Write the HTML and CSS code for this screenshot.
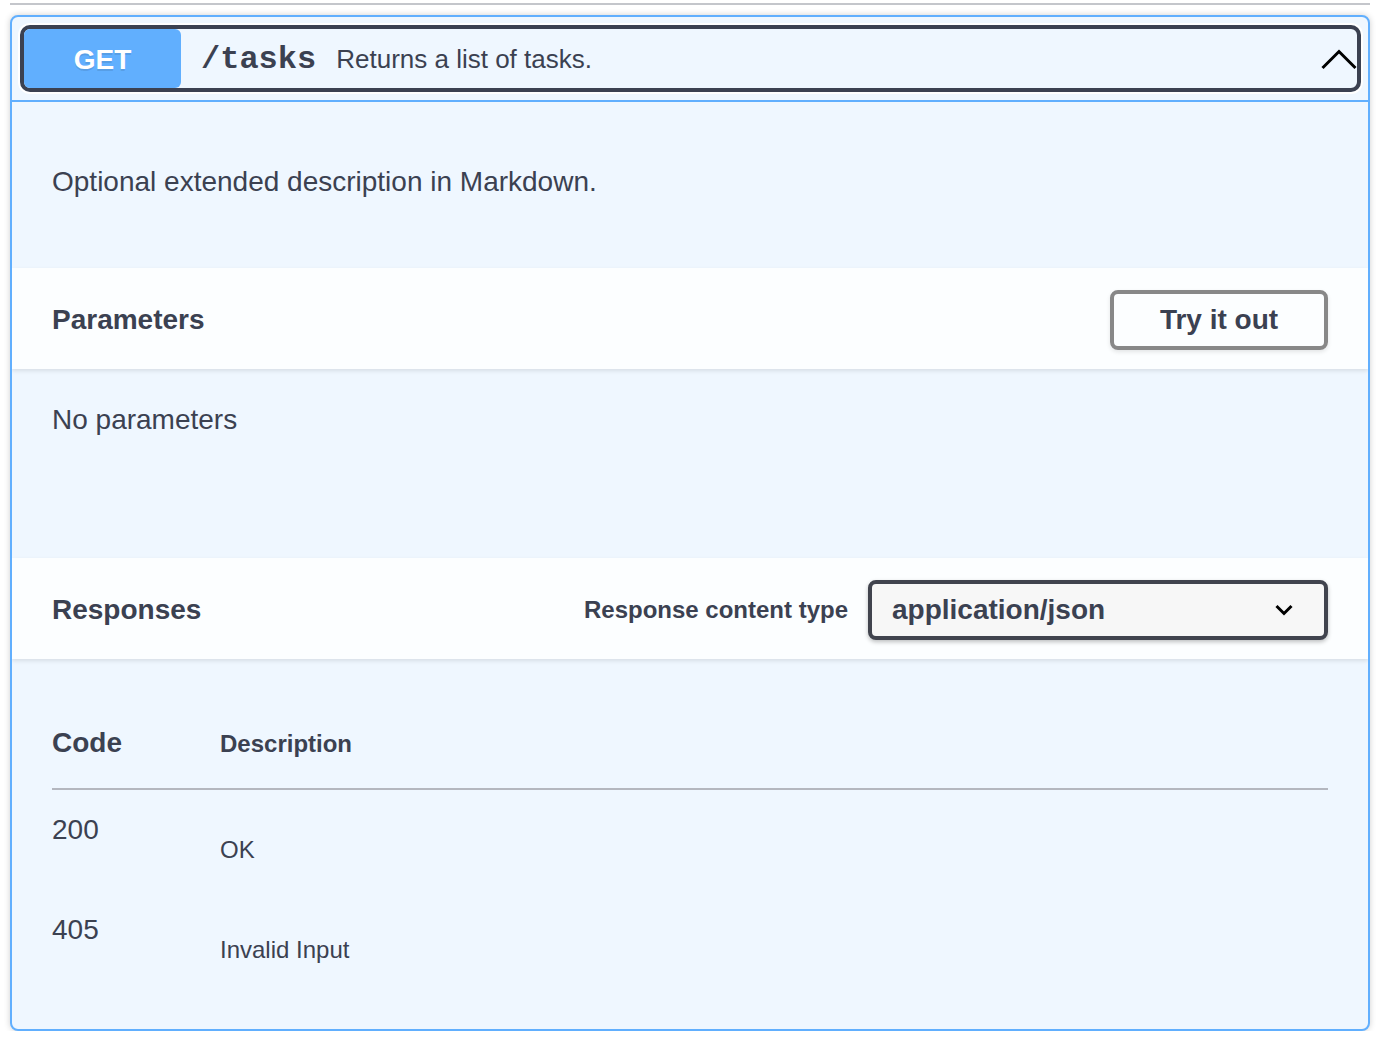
FILE: index.html
```html
<!DOCTYPE html>
<html lang="en">
<head>
<meta charset="utf-8">
<title>GET /tasks</title>
<link rel="stylesheet" href="styles.css">
</head>
<body>
<div class="page">
  <div class="tag-rule"></div>
  <div class="opblock">
    <div class="summary">
      <div class="summary-control">
        <span class="method">GET</span>
        <span class="path">/tasks</span>
        <span class="summary-desc">Returns a list of tasks.</span>
        <svg class="arrow" width="36" height="22" viewBox="0 0 36 22" aria-hidden="true">
          <polyline points="1.5,20 18,3.5 34.5,20" fill="none" stroke="#000" stroke-width="3"/>
        </svg>
      </div>
    </div>
    <div class="op-desc">
      <p>Optional extended description in Markdown.</p>
    </div>
    <div class="section-header">
      <h4>Parameters</h4>
      <button class="try-out" type="button">Try it out</button>
    </div>
    <div class="params-body">
      <p>No parameters</p>
    </div>
    <div class="section-header">
      <h4>Responses</h4>
      <div class="media-type">
        <span class="media-label">Response content type</span>
        <div class="select">
          <span>application/json</span>
          <svg width="18" height="12" viewBox="0 0 18 12" aria-hidden="true">
            <polyline points="1.5,2 9,9.5 16.5,2" fill="none" stroke="#000" stroke-width="3"/>
          </svg>
        </div>
      </div>
    </div>
    <div class="responses">
      <div class="resp-table">
        <div class="resp-head">
          <div class="col-code">Code</div>
          <div class="col-desc">Description</div>
        </div>
        <div class="resp-row">
          <div class="col-code">200</div>
          <div class="col-desc">OK</div>
        </div>
        <div class="resp-row">
          <div class="col-code">405</div>
          <div class="col-desc">Invalid Input</div>
        </div>
      </div>
    </div>
  </div>
</div>
</body>
</html>
```
FILE: styles.css
```css
* { box-sizing: border-box; }

html, body {
  margin: 0;
  padding: 0;
  background: #ffffff;
}

body {
  font-family: "Liberation Sans", Arial, Helvetica, sans-serif;
  color: #3b4151;
}

.page {
  width: 1360px;
  margin-left: 10px;
  padding-top: 3px;
}

.tag-rule {
  height: 2px;
  background: #c4c6cb;
}

.opblock {
  margin-top: 10px;
  border: 2px solid #61affe;
  border-radius: 8px;
  background: #eff7ff;
  box-shadow: 0 0 6px rgba(0, 0, 0, 0.19);
  overflow: hidden;
}

.summary {
  padding: 8px 7px 8px 8px;
  border-bottom: 2px solid #61affe;
}

.summary-control {
  display: flex;
  align-items: center;
  height: 67px;
  border: 4px solid #3b4151;
  border-radius: 10px;
  box-shadow: 0 0 0 2px #ffffff;
}

.method {
  width: 157px;
  height: 59px;
  padding-top: 1px;
  line-height: 59px;
  text-align: center;
  background: #61affe;
  color: #ffffff;
  font-weight: 700;
  font-size: 28px;
  border-radius: 6px;
  text-shadow: 0 2px 0 rgba(0, 0, 0, 0.1);
}

.path {
  padding: 2px 20px 0;
  font-family: "Liberation Mono", "Courier New", monospace;
  font-weight: 700;
  font-size: 32px;
  color: #3b4151;
}

.summary-desc {
  flex: 1;
  padding-top: 2px;
  font-size: 26px;
  color: #3b4151;
}

.arrow {
  display: block;
}

.op-desc {
  height: 166px;
  padding: 63px 40px 0;
}

.op-desc p,
.params-body p {
  margin: 0;
  font-size: 28px;
  line-height: 34px;
}

.section-header {
  display: flex;
  align-items: center;
  justify-content: space-between;
  height: 101px;
  padding: 2px 40px 0;
  background: rgba(255, 255, 255, 0.8);
  box-shadow: 0 2px 4px rgba(0, 0, 0, 0.1);
  position: relative;
}

.section-header h4 {
  margin: 0;
  padding-top: 1px;
  font-size: 28px;
  font-weight: 700;
  color: #3b4151;
}

.try-out {
  width: 218px;
  height: 60px;
  border: 4px solid #888888;
  border-radius: 8px;
  background: transparent;
  font-family: "Liberation Sans", Arial, sans-serif;
  font-size: 28px;
  font-weight: 700;
  color: #3b4151;
  box-shadow: 0 2px 4px rgba(0, 0, 0, 0.1);
  padding: 0;
}

.params-body {
  height: 189px;
  padding: 34px 40px 0;
}

.media-type {
  display: flex;
  align-items: center;
  gap: 20px;
}

.media-label {
  font-size: 24px;
  font-weight: 700;
}

.select {
  display: flex;
  align-items: center;
  justify-content: space-between;
  width: 460px;
  height: 60px;
  padding: 0 31px 0 20px;
  border: 4px solid #41444e;
  border-radius: 8px;
  background: #f7f7f7;
  box-shadow: 0 2px 4px rgba(0, 0, 0, 0.25);
  font-size: 28px;
  font-weight: 700;
  color: #3b4151;
}

.select svg {
  display: block;
}

.responses {
  height: 370px;
  padding: 67px 40px 0;
}

.resp-head,
.resp-row {
  display: grid;
  grid-template-columns: 168px 1fr;
}

.resp-head {
  align-items: baseline;
  padding-bottom: 27px;
  border-bottom: 2px solid #b4b7bf;
}

.resp-head .col-code {
  font-size: 28px;
  line-height: 34px;
  font-weight: 700;
}

.resp-head .col-desc {
  font-size: 24px;
  line-height: 34px;
  font-weight: 700;
}

.resp-row {
  align-items: start;
  padding: 23px 0 23px;
}

.resp-row .col-code {
  font-size: 28px;
  line-height: 34px;
}

.resp-row .col-desc {
  font-size: 24px;
  line-height: 34px;
  padding-top: 20px;
}
```
